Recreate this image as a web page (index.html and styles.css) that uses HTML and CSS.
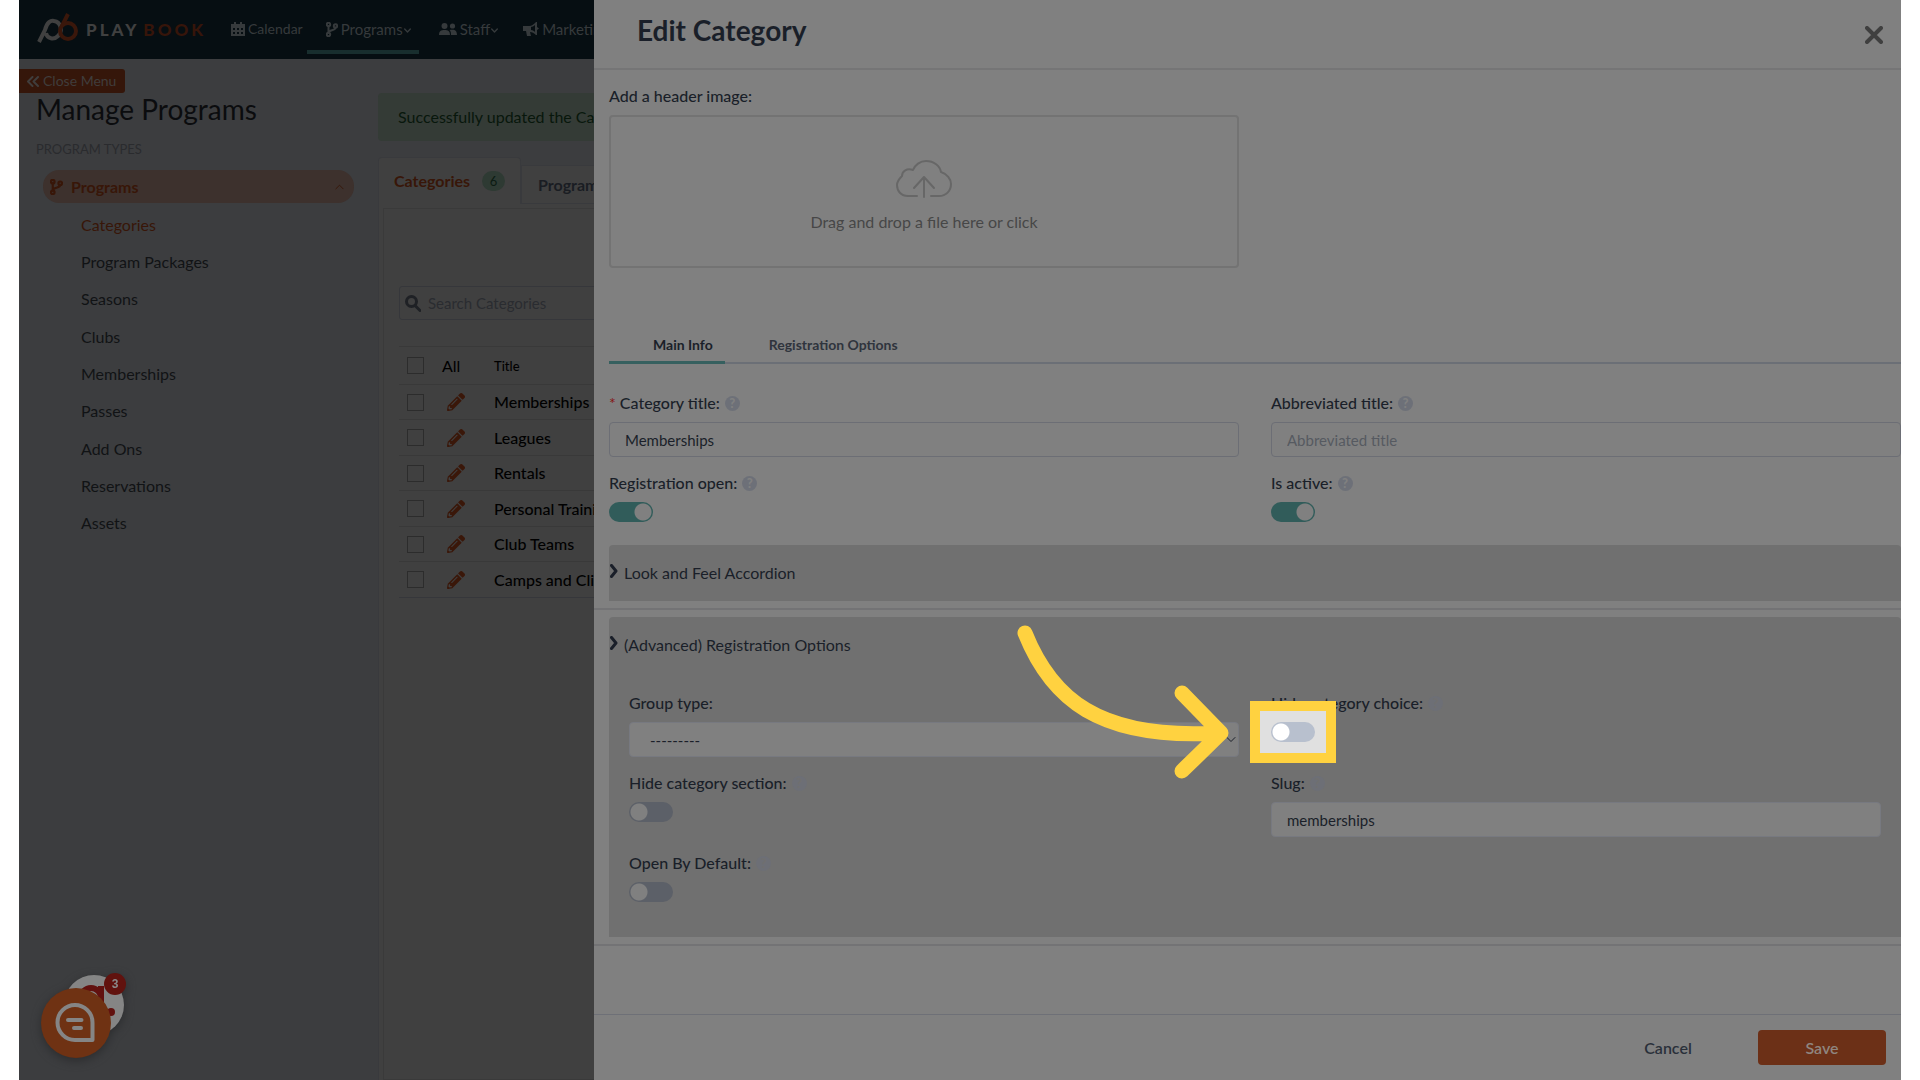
FILE: index.html
```html
<!DOCTYPE html>
<html lang="en">
<head>
<meta charset="utf-8">
<title>Playbook - Edit Category</title>
<link rel="stylesheet" href="styles.css">
</head>
<body>
<svg class="sprite" aria-hidden="true">
  <symbol id="branch" viewBox="0 0 12 15"><circle cx="2.5" cy="2.5" r="1.7"/><circle cx="2.5" cy="12.5" r="1.7"/><circle cx="9.5" cy="4" r="1.7"/><path d="M2.5 4v7M9.5 5.500C9.500 9 3 7.500 2.700 10.500"/></symbol>
  <symbol id="down" viewBox="0 0 10 6"><path d="M1 1l4 4 4-4"/></symbol>
  <symbol id="right" viewBox="0 0 8 14"><path d="M1.500 1.500L6 7l-4.500 5.500"/></symbol>
  <symbol id="pencil" viewBox="0 0 512 512"><path d="M498 142l-47 46c-4 4-12 4-16 0L324 77c-5-5-5-12 0-17l46-46c19-19 49-19 68 0l60 60c19 19 19 49 0 68zM284 100L22 362 0 485c-3 16 12 30 28 28l122-22 262-262c5-5 5-12 0-17L301 100c-5-5-12-5-17 0zM124 340c-5-6-5-14 0-20l154-154c6-5 14-5 20 0s5 14 0 20L144 340c-6 5-14 5-20 0zm-36 84h48v36l-65 12-31-31 12-65h36v48z"/></symbol>
</svg>
<div class="frame">
  <header class="topbar">
    <a class="logo" href="#" aria-label="Playbook home">
      <svg width="42" height="32" viewBox="0 0 42 32"><path class="mark-light" d="M2 30L8 18C10 10 14 8 17 9c7 1 9 10 4 15-4 4-11 3-12-3"/><path class="mark-orange" d="M31 2l-6 12"/><circle class="mark-orange" cx="31" cy="19" r="8"/></svg>
      <span class="play">PLAY</span><span class="book">BOOK</span>
    </a>
    <nav class="topnav">
      <a href="#"><svg class="fill" width="14" height="15" viewBox="0 0 14 15"><path fill-rule="evenodd" d="M3 0h2v2h4V0h2v2h3v12H0V2h3zM2 6v2h2V6zm4 0v2h2V6zm4 0v2h2V6zM2 10v2h2v-2zm4 0v2h2v-2zm4 0v2h2v-2z"/></svg>Calendar</a>
      <a href="#" class="current"><svg class="line" width="12" height="15"><use href="#branch"/></svg>Programs<svg class="line caret" width="7" height="5"><use href="#down"/></svg></a>
      <a href="#"><svg class="fill" width="18" height="14" viewBox="0 0 18 14"><circle cx="5.500" cy="4" r="3"/><circle cx="13.500" cy="4" r="2.600"/><path d="M0 13c0-4 2-5 5.500-5S11 9 11 13zM12 13c0-3-.5-4-1.500-5 5-1 7.500 0 7.500 5z"/></svg>Staff<svg class="line caret" width="7" height="5"><use href="#down"/></svg></a>
      <a href="#"><svg class="fill" width="16" height="14" viewBox="0 0 16 14"><path fill-rule="evenodd" d="M0 4h6c3 0 5-2 7-4h1v5l2 1.500-2 1.500v5h-1c-2-2-4-3-6-3l1 4H4L3 9H0zM12 3c-1 1-3 2-4 2v3c2 0 3 1 4 2z"/></svg>Marketing</a>
    </nav>
  </header>
  <div class="page">
    <aside class="sidebar">
      <button class="close-menu" type="button"><svg class="line" width="12" height="11" viewBox="0 0 12 11"><path d="M5.500 1L1 5.500 5.500 10M11 1L6.500 5.500 11 10"/></svg>Close Menu</button>
      <h1>Manage Programs</h1>
      <h2>PROGRAM TYPES</h2>
      <a class="group" href="#"><svg class="line" width="13" height="16"><use href="#branch"/></svg>Programs<svg class="line up" width="9" height="6" viewBox="0 0 10 6"><path d="M1 5l4-4 4 4"/></svg></a>
      <ul>
        <li><a class="on" href="#">Categories</a></li>
        <li><a href="#">Program Packages</a></li>
        <li><a href="#">Seasons</a></li>
        <li><a href="#">Clubs</a></li>
        <li><a href="#">Memberships</a></li>
        <li><a href="#">Passes</a></li>
        <li><a href="#">Add Ons</a></li>
        <li><a href="#">Reservations</a></li>
        <li><a href="#">Assets</a></li>
      </ul>
    </aside>
    <main class="content">
      <p class="alert">Successfully updated the Category</p>
      <div class="tabs">
        <a class="tab active" href="#">Categories<span class="count">6</span></a>
        <a class="tab" href="#">Program Packages</a>
      </div>
      <div class="outer">
        <div class="card">
          <label class="search"><svg class="line" width="16" height="17" viewBox="0 0 16 17"><circle cx="6.500" cy="6.500" r="5"/><path d="M10 10.500l5 5"/></svg><input type="search" placeholder="Search Categories" aria-label="Search Categories"></label>
          <table>
            <thead><tr><th><input type="checkbox" aria-label="Select all"></th><th class="all">All</th><th class="title">Title</th></tr></thead>
            <tbody>
              <tr><td><input type="checkbox" aria-label="Memberships"></td><td><svg class="fill pen"><use href="#pencil"/></svg></td><td>Memberships</td></tr>
              <tr><td><input type="checkbox" aria-label="Leagues"></td><td><svg class="fill pen"><use href="#pencil"/></svg></td><td>Leagues</td></tr>
              <tr><td><input type="checkbox" aria-label="Rentals"></td><td><svg class="fill pen"><use href="#pencil"/></svg></td><td>Rentals</td></tr>
              <tr><td><input type="checkbox" aria-label="Personal Training"></td><td><svg class="fill pen"><use href="#pencil"/></svg></td><td>Personal Training</td></tr>
              <tr><td><input type="checkbox" aria-label="Club Teams"></td><td><svg class="fill pen"><use href="#pencil"/></svg></td><td>Club Teams</td></tr>
              <tr><td><input type="checkbox" aria-label="Camps and Clinics"></td><td><svg class="fill pen"><use href="#pencil"/></svg></td><td>Camps and Clinics</td></tr>
            </tbody>
          </table>
        </div>
      </div>
    </main>
  </div>

  <section class="drawer" aria-label="Edit Category">
    <header class="drawer-head">
      <h2>Edit Category</h2>
      <button type="button" aria-label="Close"><svg class="line" width="18" height="18" viewBox="0 0 18 18"><path d="M2 2l14 14M16 2L2 16"/></svg></button>
    </header>
    <form class="drawer-body">
      <label class="lbl" for="img">Add a header image:</label>
      <button id="img" class="dropzone" type="button">
        <svg class="line" width="56" height="38" viewBox="0 0 56 38"><path d="M21 36H12C5 36 1 31 1 25c0-4 2-6 5-9 0-5 5-8 11-6C19 5 24 1 30 1c8 0 14 5 15 11 6 2 10 7 10 12 0 7-5 12-12 12h-8M28 37V18M18 28l10-11 10 11"/></svg>
        Drag and drop a file here or click
      </button>
      <div class="subtabs"><a class="active" href="#">Main Info</a><a href="#">Registration Options</a></div>
      <div class="grid">
        <div class="field"><label class="lbl" for="ct"><b>*</b> Category title:<i class="help">?</i></label><input id="ct" type="text" value="Memberships"></div>
        <div class="field"><label class="lbl" for="at">Abbreviated title:<i class="help">?</i></label><input id="at" type="text" placeholder="Abbreviated title"></div>
        <div class="field"><label class="lbl" for="ro">Registration open:<i class="help">?</i></label><input id="ro" class="toggle" type="checkbox" checked></div>
        <div class="field"><label class="lbl" for="ia">Is active:<i class="help">?</i></label><input id="ia" class="toggle" type="checkbox" checked></div>
      </div>
      <div class="accordion"><button type="button"><svg class="line" width="8" height="14"><use href="#right"/></svg>Look and Feel Accordion</button></div>
      <hr>
      <div class="accordion open">
        <button type="button"><svg class="line" width="8" height="14"><use href="#right"/></svg>(Advanced) Registration Options</button>
        <div class="grid inset">
          <div class="field"><label class="lbl" for="gt">Group type:</label><span class="pick"><select id="gt"><option>---------</option></select><svg class="line" width="10" height="7" viewBox="0 0 10 6"><use href="#down"/></svg></span></div>
          <div class="field"><label class="lbl" for="hc">Hide category choice:<i class="help">?</i></label><span class="spot"><input id="hc" class="toggle" type="checkbox"></span></div>
          <div class="field"><label class="lbl" for="hs">Hide category section:<i class="help">?</i></label><input id="hs" class="toggle" type="checkbox"></div>
          <div class="field"><label class="lbl" for="sl">Slug:<i class="help">?</i></label><input id="sl" type="text" value="memberships"></div>
          <div class="field"><label class="lbl" for="od">Open By Default:<i class="help">?</i></label><input id="od" class="toggle" type="checkbox"></div>
        </div>
        <svg class="arrow" width="220" height="164" viewBox="1014 622 220 164" aria-hidden="true"><path d="M1025 633C1051 698 1098 740 1218 733M1182 693l39 40-39 38"/></svg>
      </div>
      <hr>
    </form>
    <footer class="drawer-foot"><button class="cancel" type="button">Cancel</button><button class="save" type="button">Save</button></footer>
  </section>

  <button class="chat" type="button" aria-label="Open chat">
    <svg width="100" height="104" viewBox="36 960 100 104">
      <defs><clipPath id="disc"><circle cx="94" cy="1005" r="30"/></clipPath></defs>
      <circle class="disc" cx="94" cy="1005" r="30"/>
      <g clip-path="url(#disc)" class="glyph"><circle cx="91" cy="998" r="10"/><path d="M101 986v22"/><circle class="dot" cx="111" cy="1012" r="4"/></g>
      <circle class="orange" cx="76" cy="1023" r="35"/>
      <path class="bubble" d="M92 1040H75a17.500 17.500 0 1 1 17.500-17.500V1040zM68 1020h13.500M74 1028h7"/>
    </svg>
    <span class="badge">3</span>
  </button>
</div>
</body>
</html>
```
FILE: styles.css
```css
* { box-sizing: border-box; }
body { margin: 0; background: #fff; font-family: Lato, "Open Sans", sans-serif; font-size: 16px; line-height: 20px; }
a { color: inherit; text-decoration: none; }
button, input, select { font: inherit; color: inherit; }
button { border: 0; background: none; padding: 0; }
h1, h2, p, ul { margin: 0; padding: 0; font-weight: 400; }
ul { list-style: none; }
.sprite { position: absolute; width: 0; height: 0; }
.line { fill: none; stroke: currentColor; stroke-width: 2; stroke-linecap: round; stroke-linejoin: round; }
.fill { fill: currentColor; }
.frame { position: relative; margin: 0 19px; min-height: 100vh; overflow: hidden; background: #3c3d3f; display: flex; flex-direction: column; }

.topbar { height: 59px; background: #060e12; color: #363a3c; display: flex; align-items: stretch; padding-left: 18px; }
.logo { display: flex; align-items: center; width: 194px; font-size: 17px; font-weight: 900; letter-spacing: 3px; }
.logo svg { margin: 0 7px 4px 0; fill: none; stroke-width: 4; }
.mark-light { stroke: #404040; }
.mark-orange { stroke: #3a170b; }
.play { color: #404040; margin-right: 4px; }
.book { color: #36150a; }
.topnav { display: flex; }
.topnav a { display: flex; align-items: center; height: 54px; padding: 4px 0 0; margin-right: 25px; font-size: 15px; white-space: nowrap; }
.topnav a:first-child { font-size: 14px; margin-right: 22px; }
.topnav a svg { margin-right: 3px; flex: none; }
.topnav .caret { margin: 2px 0 0 1px; }
.topnav a.current { border-bottom: 4px solid #182e2e; padding: 8px 8px 0 19px; margin: 0 20px 0 -18px; }

.page { flex: 1; display: flex; }
.sidebar { width: 359px; padding-top: 10px; color: #111315; }
.close-menu { display: flex; align-items: center; gap: 4px; width: 106px; height: 24px; padding-left: 8px; border-radius: 0 3px 3px 0; background: #35160a; color: #403d3c; font-size: 14px; }
.sidebar h1 { margin: 0 17px; font-size: 28px; line-height: 32px; color: #0b0c0e; }
.sidebar h2 { margin: 14px 17px 11px; font-size: 13px; color: #2a2b2e; }
.group { display: flex; align-items: center; gap: 8px; height: 33px; margin: 0 24px 3px; padding: 0 10px 0 7px; border-radius: 16px; background: #3d312d; color: #381608; font-weight: 700; }
.group .up { margin-left: auto; stroke-width: 1; }
.sidebar li a { display: flex; align-items: center; height: 37px; padding-left: 62px; }
.sidebar li:nth-child(3n) a { height: 38px; }
.sidebar li .on { color: #381608; }

.content { flex: 1; display: flex; flex-direction: column; padding-top: 34px; min-width: 0; }
.alert { height: 48px; padding: 14px 20px; border-radius: 4px; background: #343b36; color: #08170c; }
.tabs { display: flex; align-items: flex-start; height: 47px; margin-top: 16px; }
.tab { display: flex; align-items: center; height: 39px; margin-top: 8px; padding: 0 16px; background: #404040; border: 1px solid #393a3d; color: #1a1d23; font-weight: 700; }
.tab.active { height: 47px; width: 143px; margin: 0; padding: 0 15px; border-bottom: 0; border-radius: 4px 4px 0 0; color: #381608; justify-content: space-between; }
.count { width: 23px; height: 20px; line-height: 20px; border-radius: 10px; background: #2e3a33; color: #0b1a12; text-align: center; font-weight: 400; font-size: 13px; }
.outer { flex: 1; display: flex; background: #404040; border-left: 1px solid #393a3d; padding: 4px 0 0 4px; }
.card { flex: 1; border: 1px solid #3a3a3a; padding: 77px 15px 0; color: #000; }
.search { display: flex; align-items: center; gap: 7px; height: 34px; padding-left: 5px; border: 1px solid #36373b; border-radius: 3px; color: #1f2125; }
.search svg { stroke-width: 3; }
.search input { flex: 1; min-width: 0; border: 0; background: none; padding: 0; outline: 0; font-size: 15px; }
.search input::placeholder { color: #2a2c30; opacity: 1; }
.card table { width: 100%; margin-top: 26px; border-collapse: collapse; text-align: left; table-layout: fixed; }
.card th, .card td { height: 35px; padding: 0; border-top: 1px solid #393939; font-weight: 500; white-space: nowrap; }
.card tr:nth-child(even) td { height: 36px; }
.card th { height: 38px; }
.card th.title { font-size: 13px; }
.card th.all { font-weight: 400; }
.card tr:last-child td { border-bottom: 1px solid #36373b; }
.card th:nth-child(1) { width: 43px; padding-left: 8px; }
.card td:nth-child(1) { padding-left: 8px; }
.card td:nth-child(2) { padding-left: 5px; }
.card th:nth-child(2) { width: 52px; }
.card td input, .card th input { appearance: none; display: block; width: 17px; height: 17px; margin: 0; border: 1px solid #2c2c2c; }
.pen { display: block; width: 18px; height: 18px; color: #3a1709; }

.drawer { position: absolute; inset: 0 0 0 575px; background: #808080; color: #1a1f29; display: flex; flex-direction: column; }
.drawer-head { display: flex; align-items: center; justify-content: space-between; height: 70px; padding: 0 18px 0 43px; border-bottom: 2px solid #757576; }
.drawer-head h2 { font-size: 28px; line-height: 32px; font-weight: 700; margin-bottom: 8px; }
.drawer-head svg { display: block; stroke-width: 4; color: #3f3f3f; margin-top: 2px; }
.drawer-body { flex: 1; padding: 16px 0 0 15px; display: flex; flex-direction: column; }
.lbl { display: flex; align-items: center; height: 20px; font-weight: 500; white-space: pre; }
.lbl b { color: #851515; font-weight: 400; }
.dropzone { display: flex; flex-direction: column; align-items: center; justify-content: center; gap: 14px; width: 630px; height: 153px; margin-top: 9px; border: 2px solid #737373; border-radius: 4px; color: #474747; padding-top: 8px; }
.dropzone svg { color: #676767; }
.subtabs { display: flex; height: 29px; margin-top: 67px; border-bottom: 2px solid #6b6f76; font-size: 14px; font-weight: 700; color: #2f343d; }
.subtabs a { height: 29px; padding: 0 12px 0 44px; }
.subtabs .active { color: #1a1f29; border-bottom: 3px solid #36605f; }
.grid { display: grid; grid-template-columns: 1fr 1fr; column-gap: 32px; margin-top: 29px; }
.field { height: 80px; }
.field:nth-child(n+3) { height: 72px; }
.field input[type=text], .pick select { display: block; width: 100%; height: 35px; margin-top: 9px; padding: 0 15px; border: 1px solid #6c6e75; border-radius: 4px; background: #808080; font-size: 15px; outline: 0; }
.field input::placeholder { color: #565a61; opacity: 1; }
.help { width: 15px; height: 15px; margin-left: 5px; border-radius: 50%; background: #6d7078; color: #808080; font-size: 13px; line-height: 15px; font-weight: 900; font-style: normal; text-align: center; }
.toggle { appearance: none; display: block; width: 44px; height: 20px; margin: 9px 0 0; border-radius: 10px; background: radial-gradient(circle at 10px 10px, #808080 8px, transparent 9px) #5c6068; }
.toggle:checked { background: radial-gradient(circle at 34px 10px, #808080 8px, transparent 9px) #315c5a; }
.accordion { position: relative; min-height: 56px; background: #707070; border-radius: 4px 4px 0 0; }
.accordion button { display: flex; align-items: center; gap: 6px; height: 55px; padding-left: 1px; }
.accordion button svg { stroke-width: 3; margin-bottom: 4px; }
hr { width: calc(100% + 15px); margin: 7px 0 7px -15px; border: 0; border-top: 2px solid #737375; }
.accordion.open { height: 320px; }
.inset { margin-top: 21px; padding: 0 20px; }
.inset .field:nth-child(n) { height: 80px; }
.inset .field input[type=text], .inset select { border-color: #777980; }
.inset .help { background: #6d6f76; color: #707070; }
.pick { position: relative; display: block; }
.pick select { appearance: none; padding-left: 20px; }
.pick svg { position: absolute; right: 3px; top: 14px; stroke-width: 1; }
.spot { position: absolute; top: 84px; margin-left: -21px; padding: 11px; border: 10px solid #ffd240; background: #e0e0e0; }
.spot .toggle { margin: 0; background: radial-gradient(circle at 10px 10px, #fff 8px, transparent 9px) #b8c0ce; }
.arrow { position: absolute; left: 405px; top: 5px; fill: none; stroke: #ffd240; stroke-width: 15; stroke-linecap: round; stroke-linejoin: round; }
.drawer-foot { display: flex; justify-content: flex-end; align-items: center; gap: 26px; height: 66px; padding-right: 15px; border-top: 1px solid #6e7077; font-weight: 600; }
.drawer-foot button { width: 128px; height: 35px; border-radius: 4px; }
.drawer-foot .cancel { color: #2a303a; }
.drawer-foot .save { background: #6c3017; color: #8f857f; }

.chat { position: absolute; left: 17px; bottom: 16px; width: 100px; height: 104px; filter: drop-shadow(0 3px 5px #2b2c2e); }
.chat svg { display: block; }
.disc { fill: #858585; }
.glyph { fill: none; stroke: #62110f; stroke-width: 6; }
.dot { fill: #62110f; stroke: none; }
.orange { fill: #6f3213; }
.bubble { fill: none; stroke: #858585; stroke-width: 4; stroke-linecap: round; stroke-linejoin: round; }
.badge { position: absolute; left: 68px; top: 13px; width: 22px; height: 22px; border-radius: 50%; background: #61120e; color: #8a8a8a; font: 700 12px/22px "Liberation Sans", sans-serif; text-align: center; }
```
